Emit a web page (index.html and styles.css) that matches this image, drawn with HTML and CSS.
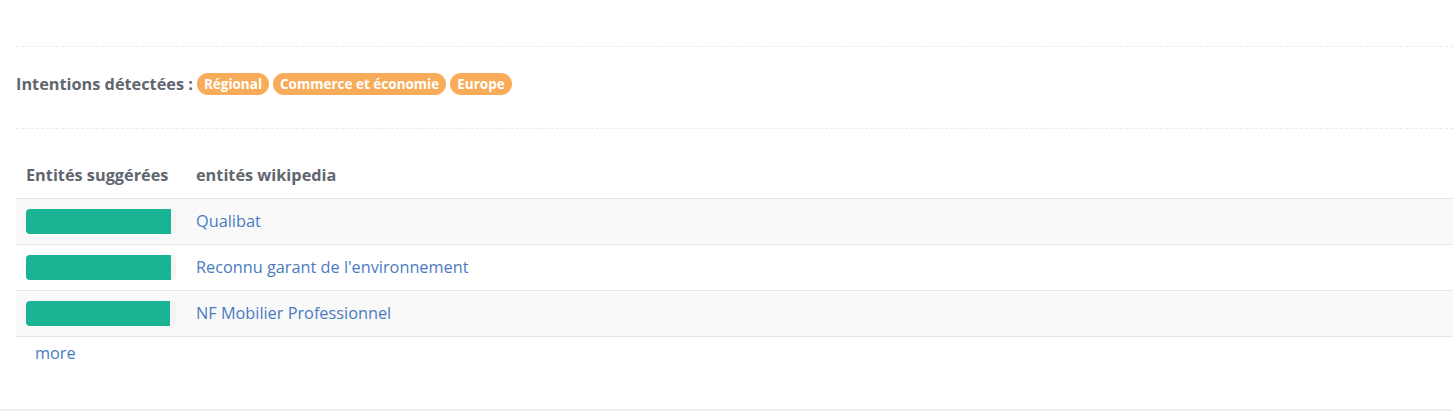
FILE: index.html
```html
<!DOCTYPE html>
<html lang="fr">
<head>
<meta charset="utf-8">
<title>Intentions</title>
<link rel="stylesheet" href="styles.css">
</head>
<body>
<div class="panel">
  <div class="sep"></div>
  <div class="intents">
    <span class="label">Intentions détectées :</span>
    <span class="badge">Régional</span>
    <span class="badge">Commerce et économie</span>
    <span class="badge">Europe</span>
  </div>
  <div class="sep"></div>
  <table class="entities">
    <thead>
      <tr><th class="c1">Entités suggérées</th><th>entités wikipedia</th></tr>
    </thead>
    <tbody>
      <tr class="odd"><td class="c1"><div class="track"><div class="fill" style="width:145px"></div></div></td><td class="c2"><a href="#">Qualibat</a></td></tr>
      <tr><td class="c1"><div class="track"><div class="fill" style="width:145px"></div></div></td><td class="c2"><a href="#">Reconnu garant de l'environnement</a></td></tr>
      <tr class="odd"><td class="c1"><div class="track"><div class="fill" style="width:144px"></div></div></td><td class="c2"><a href="#">NF Mobilier Professionnel</a></td></tr>
    </tbody>
  </table>
  <a class="more" href="#">more</a>
</div>
<div class="bottom"></div>
</body>
</html>
```

FILE: styles.css
```css
html, body {
  margin: 0;
  padding: 0;
  background: #ffffff;
  font-family: "Open Sans", "Noto Sans", sans-serif;
  color: #5f6670;
  width: 1453px;
  overflow: hidden;
}
.panel {
  padding: 46px 0 0 16px;
  height: 363px;
  box-sizing: content-box;
}
.sep {
  border-top: 1px dashed #ebebeb;
  width: 1437px;
}
.intents {
  display: flex;
  align-items: flex-start;
  height: 55px;
  padding-top: 26px;
}
.label {
  font-weight: 700;
  font-size: 16.3px;
  line-height: 22px;
  margin-right: 4px;
}
.badge {
  background: #f8ac59;
  color: #ffffff;
  font-weight: 700;
  font-size: 13.5px;
  line-height: 22px;
  height: 22px;
  padding: 0 7px;
  border-radius: 11px;
  margin-right: 4px;
}
.entities {
  border-collapse: collapse;
  width: 1437px;
  margin-top: 26px;
  font-size: 16.3px;
}
.entities th {
  text-align: left;
  font-weight: 700;
  line-height: 22px;
  padding: 9px 10px 12px;
  border-bottom: 1px solid #e3e3e3;
  vertical-align: top;
}
.entities td {
  height: 45px;
  padding: 0 10px;
  border-bottom: 1px solid #e7e7e7;
  vertical-align: middle;
}
.entities td.c2 {
  padding-bottom: 2px;
  height: 43px;
}
.entities .c1 {
  width: 150px;
}
.entities tr.odd td {
  background: #f9f9f9;
}
.track {
  width: 150px;
  height: 25px;
  background: #f4f4f4;
  border-radius: 4px;
  overflow: hidden;
}
.fill {
  height: 25px;
  background: #1ab394;
}
.entities a, .more {
  color: #4a7bbf;
  text-decoration: none;
}
.more {
  display: inline-block;
  font-size: 16.3px;
  line-height: 22px;
  margin: 5px 0 0 19px;
}
.bottom {
  border-top: 2px solid #f0f0f0;
}
```
